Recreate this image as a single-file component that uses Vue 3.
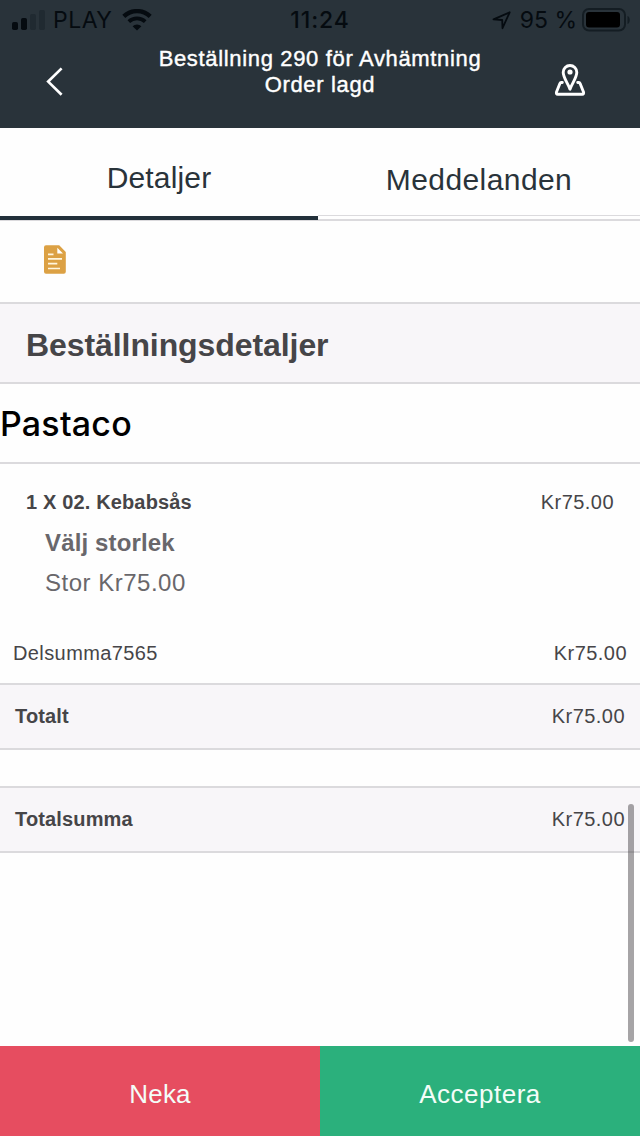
<script setup>
const tabs = [
  { label: 'Detaljer', active: true },
  { label: 'Meddelanden', active: false },
]
const price = 'Kr75.00'
</script>

<template>
  <div class="screen">
    <header class="header">
      <div class="status">
        <div class="status-left">
          <svg width="34" height="20" viewBox="0 0 34 20">
            <rect x="0" y="12" width="6" height="8" rx="1.8" fill="#050b10" />
            <rect x="9" y="8" width="6" height="12" rx="1.8" fill="#050b10" />
            <rect x="18" y="4" width="6" height="16" rx="1.8" fill="#202a31" />
            <rect x="27" y="0" width="6" height="20" rx="1.8" fill="#202a31" />
          </svg>
          <span class="carrier">PLAY</span>
          <svg class="wifi" width="30" height="22" viewBox="0 0 30 22" fill="none" stroke="#050b10">
            <path d="M1.8 7.4a19 19 0 0 1 26.4 0" stroke-width="4.3" />
            <path d="M6.8 12.6a12 12 0 0 1 16.4 0" stroke-width="3.8" />
            <path d="M10.6 17.2a6.5 6.5 0 0 1 8.8 0L15 21.6z" fill="#050b10" stroke="none" />
          </svg>
        </div>
        <span class="clock">11:24</span>
        <div class="status-right">
          <svg width="20" height="19" viewBox="0 0 20 19" fill="none" stroke="#050b10" stroke-width="1.8" stroke-linejoin="round">
            <path d="M1.5 8.4 17.7 1.3 10.5 17.2 10.2 9z" />
          </svg>
          <span class="percent">95 %</span>
          <svg width="49" height="24" viewBox="0 0 49 24">
            <rect x="1" y="1" width="42" height="21.5" rx="6" fill="none" stroke="#141d23" stroke-width="2" />
            <rect x="4" y="4" width="34" height="15.5" rx="3" fill="#000" />
            <path d="M45.5 8c3 1 3 7 0 8z" fill="#141d23" />
          </svg>
        </div>
      </div>
      <div class="navbar">
        <svg class="back" width="20" height="30" viewBox="0 0 20 30" fill="none" stroke="#fff" stroke-width="2.7">
          <path d="M17.6 1.4 4.2 14.6 17.6 27.8" />
        </svg>
        <h1 class="title">Beställning 290 för Avhämtning<br />Order lagd</h1>
        <svg class="pin" width="32" height="34" viewBox="0 0 32 34" fill="none" stroke="#fff" stroke-linejoin="round" stroke-linecap="round">
          <path d="M16 26.2C14.2 20.8 9.2 14.8 9.2 9.3a6.8 6.8 0 0 1 13.6 0c0 5.5-5 11.500-6.800 16.900z" stroke-width="2.9" />
          <circle cx="16" cy="9" r="2.600" fill="#fff" stroke="none" />
          <path d="M8.300 19.500H7.200Q6.300 19.500 5.900 20.500L2.500 29Q1.900 31.200 3.800 31.200H28.200Q30.100 31.200 29.500 29L26.100 20.500Q25.700 19.500 24.800 19.500H23.700" stroke-width="2.900" />
        </svg>
      </div>
    </header>

    <nav class="tabs">
      <div v-for="tab in tabs" :key="tab.label" class="tab" :class="{ active: tab.active }">{{ tab.label }}</div>
    </nav>

    <main class="content">
      <div class="notes">
        <svg width="22" height="29" viewBox="0 0 22 29">
          <path d="M2 .2h13.200L21.800 7v19.800q0 2-2 2H2q-2 0-2-2V2.200q0-2 2-2z" fill="#dca144" />
          <path d="M13.300 2.800v5.700H19z" fill="#fff" />
          <path d="M4 9.300h5.500M4 13.800h14M4 18.700h9.300M4 23.500h12" stroke="#fff6df" stroke-width="1.700" />
        </svg>
      </div>
      <h2 class="section">Beställningsdetaljer</h2>
      <div class="restaurant">Pastaco</div>
      <div class="item">
        <div class="item-row">
          <b>1 X 02. Kebabsås</b>
          <span class="price">{{ price }}</span>
        </div>
        <div class="option"><b>Välj storlek</b></div>
        <div class="option value">Stor {{ price }}</div>
      </div>
      <div class="subtotal">
        <span class="subtotal-label">Delsumma7565</span>
        <span class="price">{{ price }}</span>
      </div>
      <div class="total">
        <b>Totalt</b>
        <span class="price">{{ price }}</span>
      </div>
      <div class="total grand">
        <b>Totalsumma</b>
        <span class="price">{{ price }}</span>
      </div>
      <div class="scrollbar"></div>
    </main>

    <footer class="actions">
      <button class="deny">Neka</button>
      <button class="accept">Acceptera</button>
    </footer>
  </div>
</template>

<style>
body {
  margin: 0;
}
</style>

<style scoped>
.screen {
  width: 640px;
  height: 1136px;
  display: flex;
  flex-direction: column;
  background: #fefefe;
  font-family: "Liberation Sans", Arial, sans-serif;
  color: #464548;
  overflow: hidden;
}
.screen * {
  box-sizing: border-box;
}
svg {
  display: block;
  flex: none;
}
.header {
  height: 128px;
  background: #29333a;
}
.status {
  height: 40px;
  display: grid;
  grid-template-columns: 1fr auto 1fr;
  align-items: center;
  padding: 0 9px 0 12px;
  font-family: Inter, sans-serif;
  font-size: 23px;
  color: #050b10;
}
.status-left,
.status-right {
  display: flex;
  align-items: center;
}
.status-right {
  justify-content: flex-end;
}
.carrier {
  margin-left: 7px;
  letter-spacing: 0.5px;
}
.wifi {
  margin-left: 10px;
}
.clock {
  margin-right: 3px;
  font-weight: 500;
  letter-spacing: 0.9px;
}
.percent {
  margin: 0 5px 0 8px;
  letter-spacing: 0;
}
.navbar {
  height: 88px;
  display: grid;
  grid-template-columns: 110px 1fr 110px;
  align-items: start;
}
.back {
  margin: 27px 0 0 44px;
}
.title {
  margin: 6px 0 0;
  text-align: center;
  font-size: 22px;
  line-height: 26px;
  font-weight: 400;
  letter-spacing: 0.66px;
  color: #fff;
  -webkit-text-stroke: 0.4px #fff;
}
.pin {
  margin: 23px 0 0 24px;
}
.tabs {
  height: 93px;
  display: grid;
  grid-template-columns: 318px 322px;
  border-bottom: 2px solid #dbdadd;
}
.tab {
  height: 88px;
  display: flex;
  align-items: center;
  justify-content: center;
  font-size: 30px;
  padding-top: 16px;
  letter-spacing: 0.42px;
  color: #29333a;
  border-bottom: 1px solid #dbdadd;
}
.tab.active {
  height: 92px;
  border-bottom: 4px solid #22303a;
  letter-spacing: 0.15px;
  padding-top: 12px;
}
.content {
  position: relative;
  flex: 1;
}
.notes {
  height: 81px;
  padding: 24px 0 0 44px;
}
.section {
  margin: 0;
  height: 82px;
  border-top: 2px solid #dbdadd;
  border-bottom: 2px solid #dbdadd;
  background: #f8f6f9;
  padding: 2px 0 0 26px;
  line-height: 78px;
  font-size: 32px;
  letter-spacing: -0.08px;
}
.restaurant {
  height: 80px;
  border-bottom: 2px solid #dbdadd;
  line-height: 79px;
  font-family: Inter, sans-serif;
  font-size: 34px;
  font-weight: 500;
  letter-spacing: 0.2px;
  color: #000;
}
.item {
  height: 173px;
  padding: 18px 26px 0;
}
.item-row,
.subtotal,
.total {
  display: flex;
  justify-content: space-between;
  align-items: center;
  font-size: 20px;
  letter-spacing: 0.15px;
}
.item-row {
  height: 41px;
}
.price {
  letter-spacing: 0.45px;
}
.option {
  padding-left: 19px;
  height: 40px;
  line-height: 40px;
  font-size: 24px;
  letter-spacing: 0.15px;
  color: #69676b;
}
.option.value {
  letter-spacing: 0.5px;
}
.subtotal {
  height: 46px;
  padding: 0 13px 14px;
}
.subtotal-label {
  letter-spacing: 0.4px;
}
.total {
  height: 67px;
  padding: 0 15px;
  border-top: 2px solid #dbdadd;
  border-bottom: 2px solid #dbdadd;
  background: #f8f6f9;
}
.total.grand {
  margin-top: 36px;
}
.scrollbar {
  position: absolute;
  right: 6px;
  bottom: 4px;
  width: 6px;
  height: 238px;
  border-radius: 3px;
  background: rgba(60, 56, 60, 0.45);
}
.actions {
  height: 90px;
  display: grid;
  grid-template-columns: 1fr 1fr;
}
.actions button {
  border: 0;
  padding: 6px 0 0;
  font: 26px "Liberation Sans", Arial, sans-serif;
  letter-spacing: 0.5px;
  color: #f4fdf8;
}
.actions .deny {
  background: #e64d60;
  letter-spacing: 0.2px;
}
.accept {
  background: #2bb07c;
}
</style>
